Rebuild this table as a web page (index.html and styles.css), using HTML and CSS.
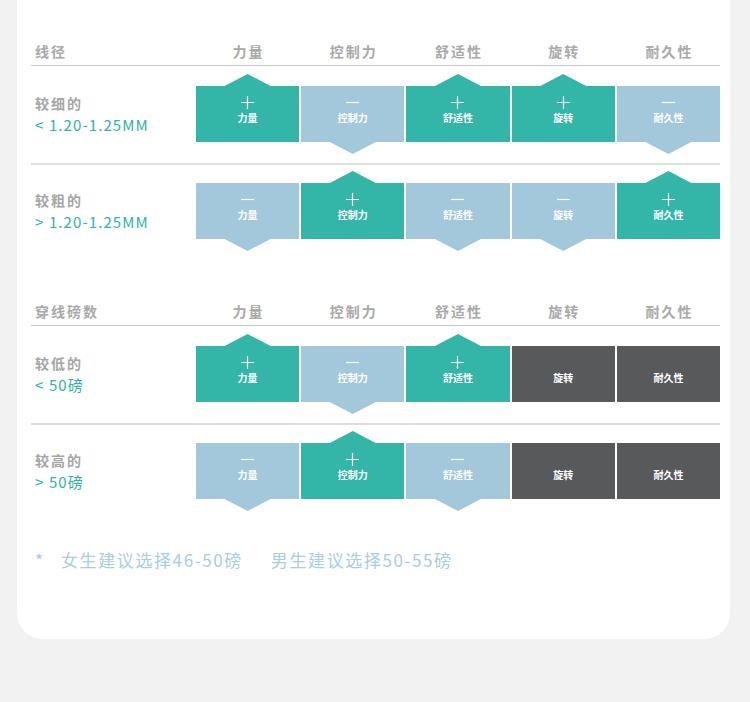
FILE: index.html
```html
<!DOCTYPE html>
<html lang="zh">
<head>
<meta charset="utf-8">
<link rel="stylesheet" href="styles.css">
</head>
<body>
<div class="card">
  <section class="sec">
    <div class="head">
      <div class="h-label">线径</div>
      <div class="h-col">力量</div>
      <div class="h-col">控制力</div>
      <div class="h-col">舒适性</div>
      <div class="h-col">旋转</div>
      <div class="h-col">耐久性</div>
    </div>
    <div class="row sep">
      <div class="label"><div class="name">较细的</div><div class="val">&lt; 1.20-1.25MM</div></div>
      <div class="cell good"><svg class="sym" viewBox="0 0 13 13"><path d="M6.5 0v13M0 6.5h13"/></svg><span class="t">力量</span></div>
      <div class="cell bad"><svg class="sym" viewBox="0 0 13 13"><path d="M0 6.5h13"/></svg><span class="t">控制力</span></div>
      <div class="cell good"><svg class="sym" viewBox="0 0 13 13"><path d="M6.5 0v13M0 6.5h13"/></svg><span class="t">舒适性</span></div>
      <div class="cell good"><svg class="sym" viewBox="0 0 13 13"><path d="M6.5 0v13M0 6.5h13"/></svg><span class="t">旋转</span></div>
      <div class="cell bad"><svg class="sym" viewBox="0 0 13 13"><path d="M0 6.5h13"/></svg><span class="t">耐久性</span></div>
    </div>
    <div class="row">
      <div class="label"><div class="name">较粗的</div><div class="val">&gt; 1.20-1.25MM</div></div>
      <div class="cell bad"><svg class="sym" viewBox="0 0 13 13"><path d="M0 6.5h13"/></svg><span class="t">力量</span></div>
      <div class="cell good"><svg class="sym" viewBox="0 0 13 13"><path d="M6.5 0v13M0 6.5h13"/></svg><span class="t">控制力</span></div>
      <div class="cell bad"><svg class="sym" viewBox="0 0 13 13"><path d="M0 6.5h13"/></svg><span class="t">舒适性</span></div>
      <div class="cell bad"><svg class="sym" viewBox="0 0 13 13"><path d="M0 6.5h13"/></svg><span class="t">旋转</span></div>
      <div class="cell good"><svg class="sym" viewBox="0 0 13 13"><path d="M6.5 0v13M0 6.5h13"/></svg><span class="t">耐久性</span></div>
    </div>
  </section>

  <section class="sec sec2">
    <div class="head">
      <div class="h-label">穿线磅数</div>
      <div class="h-col">力量</div>
      <div class="h-col">控制力</div>
      <div class="h-col">舒适性</div>
      <div class="h-col">旋转</div>
      <div class="h-col">耐久性</div>
    </div>
    <div class="row sep">
      <div class="label"><div class="name">较低的</div><div class="val">&lt; 50磅</div></div>
      <div class="cell good"><svg class="sym" viewBox="0 0 13 13"><path d="M6.5 0v13M0 6.5h13"/></svg><span class="t">力量</span></div>
      <div class="cell bad"><svg class="sym" viewBox="0 0 13 13"><path d="M0 6.5h13"/></svg><span class="t">控制力</span></div>
      <div class="cell good"><svg class="sym" viewBox="0 0 13 13"><path d="M6.5 0v13M0 6.5h13"/></svg><span class="t">舒适性</span></div>
      <div class="cell na"><span class="sym"></span><span class="t">旋转</span></div>
      <div class="cell na"><span class="sym"></span><span class="t">耐久性</span></div>
    </div>
    <div class="row">
      <div class="label"><div class="name">较高的</div><div class="val">&gt; 50磅</div></div>
      <div class="cell bad"><svg class="sym" viewBox="0 0 13 13"><path d="M0 6.5h13"/></svg><span class="t">力量</span></div>
      <div class="cell good"><svg class="sym" viewBox="0 0 13 13"><path d="M6.5 0v13M0 6.5h13"/></svg><span class="t">控制力</span></div>
      <div class="cell bad"><svg class="sym" viewBox="0 0 13 13"><path d="M0 6.5h13"/></svg><span class="t">舒适性</span></div>
      <div class="cell na"><span class="sym"></span><span class="t">旋转</span></div>
      <div class="cell na"><span class="sym"></span><span class="t">耐久性</span></div>
    </div>
  </section>

  <p class="note"><span class="star">*</span><span class="n1">女生建议选择46-50磅</span><span class="n2">男生建议选择50-55磅</span></p>
</div>
</body>
</html>
```

FILE: styles.css
```css
* { box-sizing: border-box; }
html, body { margin: 0; padding: 0; }
body {
  background: #f2f2f2;
  font-family: "Noto Sans CJK SC", "Noto Sans", sans-serif;
  width: 750px;
  height: 702px;
  overflow: hidden;
}
.card {
  background: #fff;
  margin-left: 17px;
  width: 713px;
  border-radius: 0 0 26px 26px;
  padding: 37px 10px 67px 14px;
}
.head, .row {
  display: grid;
  grid-template-columns: 163px repeat(5, 1fr);
  column-gap: 2px;
  align-items: center;
}
.head {
  height: 29px;
  border-bottom: 1.5px solid #c9c9c9;
  color: #a9a9a9;
  font-size: 14px;
  font-weight: 700;
  letter-spacing: 2px;
  line-height: 28px;
}
.h-label { padding-left: 4px; }
.h-col { text-align: center; padding-left: 2px; }
.row {
  padding: 20px 0 21px;
}
.row.sep { border-bottom: 2px solid #dedede; }
.row.sep + .row { padding-top: 18px; }
.label { padding-left: 4px; }
.name {
  color: #a6a6a6;
  font-size: 14px;
  font-weight: 700;
  letter-spacing: 2px;
  line-height: 22px;
}
.val {
  color: #2fb3a5;
  font-size: 15px;
  letter-spacing: 1.1px;
  line-height: 22px;
}
.cell {
  position: relative;
  height: 56px;
  display: flex;
  flex-direction: column;
  align-items: center;
  padding-top: 10px;
  color: #fff;
}
.cell.good { background: #33b5a8; }
.cell.bad { background: #a3c8db; }
.cell.na { background: #58595b; }
.cell.good::before, .cell.bad::after {
  content: "";
  position: absolute;
  left: 50%;
  width: 46px;
  height: 12px;
  margin-left: -23px;
}
.cell.good::before {
  top: -12px;
  background: #33b5a8;
  clip-path: polygon(0 100%, 50% 0, 100% 100%);
}
.cell.bad::after {
  bottom: -12px;
  background: #a3c8db;
  clip-path: polygon(0 0, 100% 0, 50% 100%);
}
.sym {
  display: block;
  width: 13px;
  height: 13px;
  flex: none;
}
.sym path { stroke: #fff; stroke-width: 1.2; fill: none; }
.t {
  margin-top: 2px;
  font-size: 10px;
  font-weight: 700;
  line-height: 14px;
}
.sec2 { margin-top: 36px; }
.row:last-child { padding-bottom: 22px; }
.note {
  margin: 27px 0 0;
  padding-left: 4px;
  color: #a8cee0;
  font-size: 17px;
  line-height: 24px;
  letter-spacing: 1.6px;
  white-space: nowrap;
}
.star { display: inline-block; width: 26px; }
.n2 { margin-left: 28px; }
```
